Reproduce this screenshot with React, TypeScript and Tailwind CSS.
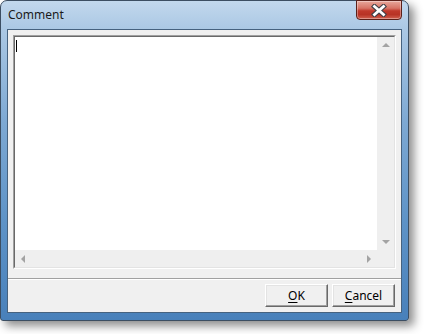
import React from 'react';

const font = { fontFamily: '"Noto Sans", "Open Sans", sans-serif' };

const CloseGlyph = () => (
  <svg width="16" height="13" viewBox="0 0 16 13">
    <path d="M3.5 2.5 L12.5 10.5 M12.5 2.5 L3.5 10.5" stroke="#3f3f46" strokeWidth="5" strokeLinecap="square" fill="none" />
    <path d="M3.5 2.5 L12.5 10.5 M12.5 2.5 L3.5 10.5" stroke="#ffffff" strokeWidth="2.8" strokeLinecap="square" fill="none" />
  </svg>
);

const Arrow = ({ dir }: { dir: 'up' | 'down' | 'left' | 'right' }) => {
  const pts = {
    up: '0,4 4,0 8,4',
    down: '0,0 8,0 4,4',
    left: '4,0 4,8 0,4',
    right: '0,0 0,8 4,4',
  }[dir];
  const vertical = dir === 'up' || dir === 'down';
  return (
    <svg width={vertical ? 8 : 4} height={vertical ? 4 : 8} viewBox={vertical ? '0 0 8 4' : '0 0 4 8'}>
      <polygon points={pts} fill="#a3a3a3" />
    </svg>
  );
};

const DialogButton = ({ mnemonic, rest }: { mnemonic: string; rest: string }) => (
  <button className="w-[63px] h-[23px] bg-[#f0f0f0] border border-t-white border-l-white border-b-[#696969] border-r-[#696969] shadow-[inset_-1px_-1px_0_#a0a0a0,inset_1px_1px_0_#e3e3e3] text-[12px] text-black leading-none flex items-center justify-center">
    <span>
      <span className="underline underline-offset-2">{mnemonic}</span>
      {rest}
    </span>
  </button>
);

export default function App() {
  return (
    <div className="w-[424px] h-[334px] bg-white" style={font}>
      <div className="relative w-[409px] h-[321px] rounded-t-[7px] rounded-b-[3px] border border-[#3c4e62] bg-[linear-gradient(to_bottom,#c2d8ed_0px,#abc8e4_28px,#7ea9d3_120px,#5e93c7_220px,#4880ba_321px)] shadow-[5px_5px_10px_rgba(0,0,0,0.45)] flex flex-col px-[6px] pb-[7px]">
        <div className="h-[28px] flex items-center pl-[1px] text-[12px] text-[#1b1b1b]">Comment</div>

        <div className="absolute top-[-1px] right-[6px] w-[46px] h-[20px] rounded-b-[4px] border border-[#5b2019] bg-[linear-gradient(to_bottom,#e8a89c_0%,#d77466_40%,#c0392b_55%,#b83325_75%,#d0604f_100%)] shadow-[inset_0_0_0_1px_rgba(255,255,255,0.35)] flex items-center justify-center">
          <CloseGlyph />
        </div>

        <div className="flex-1 flex flex-col border border-[#46627f] bg-[#f0f0f0]">
          <div className="mt-[5px] ml-[5px] mr-[5px] h-[234px] border border-t-[#a0a0a0] border-l-[#a0a0a0] border-b-white border-r-white">
            <div className="h-full border border-t-[#696969] border-l-[#696969] border-b-[#e3e3e3] border-r-[#e3e3e3] bg-white grid grid-cols-[1fr_17px] grid-rows-[1fr_17px]">
              <div className="relative">
                <div className="absolute left-[1px] top-[3px] w-[1px] h-[12px] bg-black" />
              </div>
              <div className="bg-[#efefef] flex flex-col items-center justify-between py-[6px]">
                <Arrow dir="up" />
                <Arrow dir="down" />
              </div>
              <div className="bg-[#efefef] flex items-center justify-between px-[6px]">
                <Arrow dir="left" />
                <Arrow dir="right" />
              </div>
              <div className="bg-[#efefef]" />
            </div>
          </div>

          <div className="mt-[9px] h-[2px] border-t border-t-[#a0a0a0] border-b border-b-white" />

          <div className="flex justify-end gap-[4px] mt-[4px] mr-[6px]">
            <DialogButton mnemonic="O" rest="K" />
            <DialogButton mnemonic="C" rest="ancel" />
          </div>
        </div>
      </div>
    </div>
  );
}
